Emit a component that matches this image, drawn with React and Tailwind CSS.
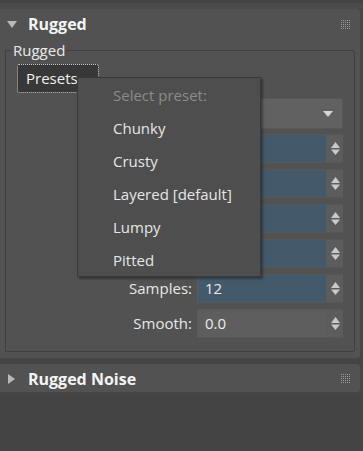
import React from "react";

function Grip() {
  const dots = [];
  for (let r = 0; r < 5; r++)
    for (let c = 0; c < 5; c++)
      dots.push(<rect key={r + "-" + c} x={c * 2} y={r * 2} width="1" height="1" fill="#9c9c9c" />);
  return (
    <svg width="9" height="9" viewBox="0 0 9 9" className="block">
      {dots}
    </svg>
  );
}

function SpinArrows() {
  return (
    <svg width="9" height="13" viewBox="0 0 9 13" className="block">
      <polygon points="4.5,0 9,6 0,6" fill="#c9c9c9" />
      <polygon points="0,7.5 9,7.5 4.5,13" fill="#c9c9c9" />
    </svg>
  );
}

function Spinner({ value = "", blue = true }) {
  return (
    <div className="w-[146px] h-[29px] bg-[#5c5c5c] flex items-stretch border-y border-[#575757]">
      <div className={(blue ? "bg-[#44596a]" : "bg-[#5e5e5e]") + " ml-[1px] w-[128px] flex items-center pl-[7px] text-[15px] text-[#ececec]"}>
        {value}
      </div>
      <div className="flex-1 flex items-center justify-center pl-[2px]">
        <SpinArrows />
      </div>
    </div>
  );
}

function Row({ label, children, h = "h-[29px]" }) {
  return (
    <div className={h + " flex items-center justify-end pr-[11px]"}>
      {label && <span className="text-[15px] text-[#e8e8e8] mr-[5px] leading-none">{label}</span>}
      {children}
    </div>
  );
}

export default function App() {
  return (
    <div className="w-[363px] h-[451px] bg-[#444444] overflow-hidden relative font-['Open_Sans',sans-serif]">
      <div className="h-[3px] bg-[#434343]" />
      <div className="h-[6px] bg-[#4a4a4a]" />
      {/* Rugged panel */}
      <div className="w-[361px] h-[350px] bg-[#525252] rounded-r-[4px] border-r border-b border-[#474747]">
        <div className="h-[30px] flex items-center">
          <svg width="10" height="7" viewBox="0 0 10 7" className="ml-[7px] block">
            <polygon points="0,0 10,0 5,7" fill="#b9b9b9" />
          </svg>
          <span className="ml-[11px] text-[16px] font-bold text-[#f4f4f4] leading-none">Rugged</span>
          <div className="ml-auto mr-[10px]">
            <Grip />
          </div>
        </div>
        <div className="mt-[11px] ml-[5px] w-[350px] h-[302px] border border-[#3f3f3f] rounded-tr-[3px] rounded-br-[2px] relative">
          <span className="absolute -top-[11px] left-[6px] px-[1px] bg-[#525252] text-[15px] text-[#eaeaea] leading-[20px]">
            Rugged
          </span>
          <div className="pt-[13px] pl-[11px]">
            <div className="w-[82px] h-[29px] bg-[#383838] border border-dotted border-[#cfcfcf] rounded-[2px] flex items-center pl-[8px] text-[15px] text-[#f0f0f0]">
              Presets
            </div>
          </div>
          <div className="mt-[5px] flex flex-col">
            <Row h="h-[31px]">
              <div className="w-[146px] h-[31px] bg-[#616161] border border-[#585858] flex items-center justify-end pr-[9px]">
                <svg width="10" height="6" viewBox="0 0 10 6" className="block">
                  <polygon points="0,0 10,0 5,6" fill="#d4d4d4" />
                </svg>
              </div>
            </Row>
            <div className="h-[5px]" />
            <Row><Spinner /></Row>
            <div className="h-[6px]" />
            <Row><Spinner /></Row>
            <div className="h-[6px]" />
            <Row><Spinner /></Row>
            <div className="h-[6px]" />
            <Row><Spinner /></Row>
            <div className="h-[6px]" />
            <Row label="Samples:"><Spinner value="12" /></Row>
            <div className="h-[6px]" />
            <Row label="Smooth:"><Spinner value="0.0" blue={false} /></Row>
          </div>
        </div>
      </div>
      {/* Rugged Noise panel */}
      <div className="mt-[5px] w-[361px] h-[29px] bg-[#525252] rounded-r-[4px] border-r border-b border-[#474747] flex items-center pt-[1px]">
        <svg width="7" height="10" viewBox="0 0 7 10" className="ml-[8px] block">
          <polygon points="0,0 7,5 0,10" fill="#b9b9b9" />
        </svg>
        <span className="ml-[13px] text-[16px] font-bold text-[#f4f4f4] leading-none">Rugged Noise</span>
        <div className="ml-auto mr-[10px]">
          <Grip />
        </div>
      </div>

      {/* Presets popup menu */}
      <div className="absolute left-[77px] top-[77px] w-[184px] h-[200px] bg-[#4e4e4e] border border-[#393939] shadow-[2px_2px_2px_rgba(0,0,0,0.35)] pt-[1px]">
        <div className="h-[33px] flex items-center pl-[35px] text-[15px] text-[#8b8b8b]">Select preset:</div>
        <div className="h-[33px] flex items-center pl-[35px] text-[15px] text-[#e6e6e6]">Chunky</div>
        <div className="h-[33px] flex items-center pl-[35px] text-[15px] text-[#e6e6e6]">Crusty</div>
        <div className="h-[33px] flex items-center pl-[35px] text-[15px] text-[#e6e6e6]">Layered [default]</div>
        <div className="h-[33px] flex items-center pl-[35px] text-[15px] text-[#e6e6e6]">Lumpy</div>
        <div className="h-[33px] flex items-center pl-[35px] text-[15px] text-[#e6e6e6]">Pitted</div>
      </div>
    </div>
  );
}
